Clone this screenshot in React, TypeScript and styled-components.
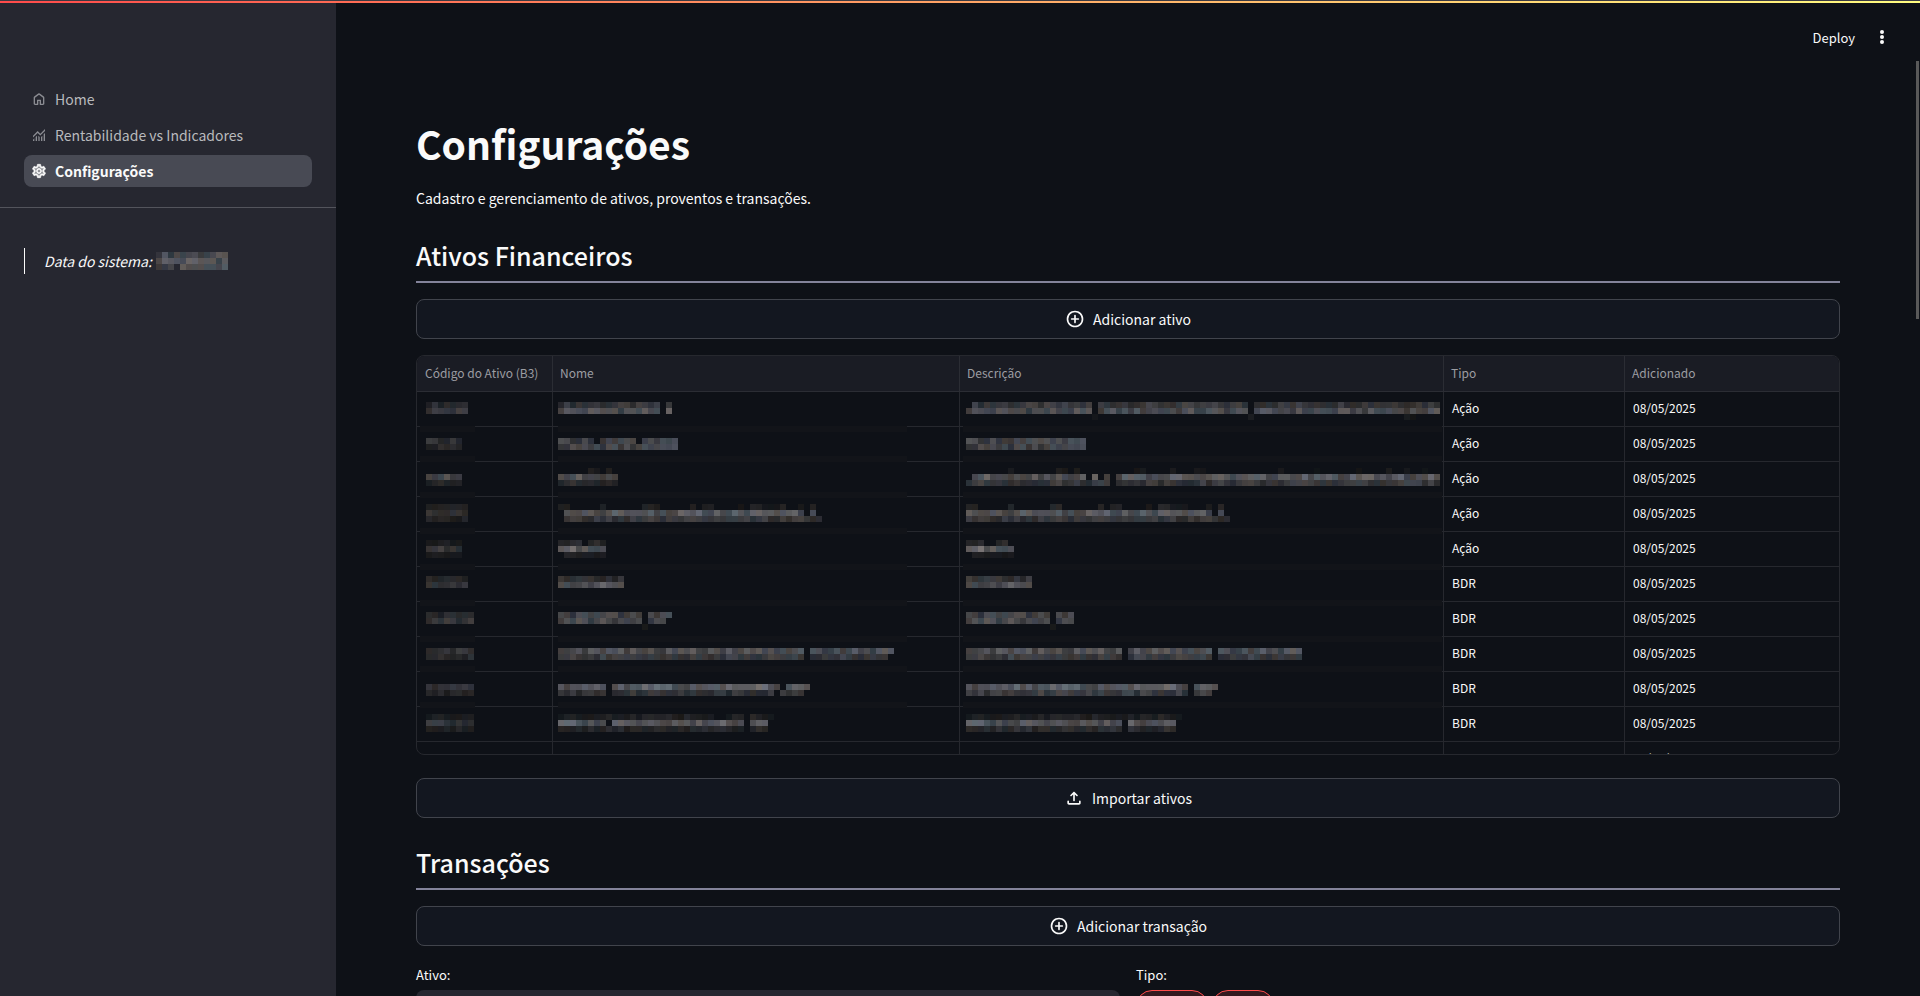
import React from "react";
import styled, { createGlobalStyle } from "styled-components";
import { MdOutlineSettings } from "react-icons/md";

const GlobalStyle = createGlobalStyle`
  *, *::before, *::after { box-sizing: border-box; }
  body { margin: 0; background: #0e1117; }
  body, button, select, table { font-family: "Noto Sans CJK JP", "Noto Sans", sans-serif; }
`;

const Shell = styled.div`
  position: relative;
  display: flex;
  height: 100vh;
  overflow: hidden;
  color: #fafafa;
  background: #0e1117;
  font-size: 14px;
  line-height: 26px;
`;

const Decoration = styled.div`
  position: absolute;
  inset: 0 0 auto 0;
  height: 3px;
  border-top: 1px solid #3a3a42;
  background: linear-gradient(90deg, #ff4b4b, #fffd80);
  background-origin: border-box;
  z-index: 2;
`;

const Sidebar = styled.aside`
  flex: 0 0 336px;
  background: #262730;
`;

const Nav = styled.nav`
  padding: 83px 24px 20px;
  border-bottom: 1px solid #53545c;
`;

const NavList = styled.ul`
  display: flex;
  flex-direction: column;
  gap: 4px;
  margin: 0;
  padding: 0;
  list-style: none;
`;

const NavLink = styled.a<{ $active?: boolean }>`
  display: flex;
  align-items: center;
  gap: 8px;
  height: 32px;
  padding: 0 7px;
  border-radius: 8px;
  text-decoration: none;
  color: ${(p) => (p.$active ? "#fafafa" : "#b9babd")};
  font-weight: ${(p) => (p.$active ? 700 : 400)};
  background: ${(p) => (p.$active ? "#484a54" : "transparent")};

  svg {
    flex: none;
    width: 16px;
    height: 16px;
    color: ${(p) => (p.$active ? "#fafafa" : "#8b8c92")};
  }

  svg path:last-of-type {
    stroke: ${(p) => (p.$active ? "currentColor" : "none")};
    stroke-width: 1px;
  }
`;

const SystemDate = styled.blockquote`
  display: flex;
  align-items: center;
  gap: 4px;
  height: 26px;
  margin: 40px 24px;
  padding-left: 19px;
  border-left: 1px solid #fafafa;
  font-style: italic;
  line-height: 24px;
`;

const Main = styled.main`
  position: relative;
  flex: 1;
  min-width: 0;
  overflow: hidden;
`;

const Toolbar = styled.header`
  display: flex;
  justify-content: flex-end;
  align-items: center;
  gap: 17px;
  height: 60px;
  padding: 14px 28px 0 0;
`;

const ToolbarButton = styled.button`
  display: flex;
  align-items: center;
  padding: 0;
  border: 0;
  background: none;
  color: #fafafa;
  font-size: 13px;
`;

const ScrollThumb = styled.div`
  position: absolute;
  top: 61px;
  right: 1px;
  width: 3px;
  height: 258px;
  background: #595959;
`;

const Content = styled.div`
  display: flex;
  flex-direction: column;
  padding: 57px 80px 0;
`;

const Title = styled.h1`
  margin: 0;
  font-size: 39px;
  line-height: 52px;
  font-weight: 700;
`;

const Lead = styled.p`
  margin: 16px 0;
`;

const SectionTitle = styled.h2`
  margin: 0;
  padding: 10px 0 8px;
  border-bottom: 2px solid #83839a;
  font-size: 25px;
  line-height: 36px;
  font-weight: 500;
`;

const WideButton = styled.button`
  display: flex;
  justify-content: center;
  align-items: center;
  gap: 8px;
  width: 100%;
  height: 40px;
  margin: 16px 0;
  border: 1px solid #41444c;
  border-radius: 8px;
  background: #131720;
  color: #fafafa;
  font-size: 14px;

  svg {
    width: 20px;
    height: 20px;
  }
`;

const TableFrame = styled.div`
  height: 400px;
  margin-bottom: 7px;
  overflow: hidden;
  border: 1px solid #26282e;
  border-radius: 8px;
`;

const Table = styled.table`
  width: 100%;
  table-layout: fixed;
  border-collapse: separate;
  border-spacing: 0;
  font-size: 12px;
  line-height: 16px;
`;

const Col = styled.col<{ $width?: number }>`
  width: ${(p) => (p.$width ? p.$width + "px" : "auto")};
`;

const HeadCell = styled.th`
  height: 36px;
  padding: 0 7px 2px;
  border: solid #2b2d34;
  border-width: 0 1px 1px 0;
  background: #1a1c24;
  color: #9c9da2;
  font-weight: 400;
  text-align: left;
  white-space: nowrap;

  &:first-child { padding-left: 8px; }
  &:last-child { border-right: 0; }
`;

const Cell = styled.td`
  position: relative;
  height: 35px;
  padding: 0 8px 2px;
  border: solid #26282e;
  border-width: 0 1px 1px 0;

  &:last-child { border-right: 0; }
`;

const Overlay = styled.div<{ $left: number }>`
  position: absolute;
  left: ${(p) => p.$left}px;
  top: 10px;
  z-index: 1;
  display: flex;
`;

const FieldRow = styled.div`
  display: grid;
  grid-template-columns: 1fr 1fr;
  gap: 16px;
  font-size: 13px;
`;

const Field = styled.div`
  display: flex;
  flex-direction: column;
  gap: 2px;
`;

const Select = styled.select`
  height: 40px;
  padding: 0 12px;
  border: 0;
  border-radius: 8px;
  appearance: none;
  background: #262730;
  color: #fafafa;
  font-size: 14px;
`;

const PillGroup = styled.div`
  display: flex;
  gap: 4px;
`;

const Pill = styled.button`
  height: 32px;
  padding: 0 11px;
  border: 1px solid #ff4b4b;
  border-radius: 16px;
  background: #33191f;
  color: #ff4b4b;
  font-size: 13px;
`;

const BLOCK = 6;
const TINTS = [
  [-4, 0, 12],
  [5, 0, 0],
  [0, 0, 4],
  [-8, 2, 10],
  [6, 1, -2],
  [0, 0, 8],
  [0, 1, 3],
];

type Run = [from: number, to: number];
type MosaicLine = [row: number, shade: number, ...runs: Run[]];

const noise = (x: number, y: number) => {
  const n = Math.sin(x * 12.9898 + y * 78.233) * 43758.5453;
  return n - Math.floor(n);
};

const blockColor = (x: number, y: number, shade: number) => {
  const level = shade * (0.7 + 0.5 * noise(x, y));
  const tint = TINTS[Math.floor(noise(y + 3, x + 5) * TINTS.length)];
  const strength = Math.min(1, shade / 70);
  return `rgb(${tint.map((t) => Math.round(level + t * strength)).join(",")})`;
};

// Pixelated cover for private values: each run fills blocks [from, to) of its row.
const Mosaic = ({ lines, offset = 0 }: { lines: MosaicLine[]; offset?: number }) => (
  <>
    {lines.map(([row, shade, ...runs]) =>
      runs.map(([from, to]) =>
        Array.from({ length: to - from }, (_, i) => (
          <rect
            key={`${row}-${from + i}`}
            x={offset + (from + i) * BLOCK}
            y={row * BLOCK}
            width={BLOCK}
            height={BLOCK}
            fill={blockColor(from + i, row, shade)}
          />
        ))
      )
    )}
  </>
);

const STRIPS = [4, 9, 15, 21, 27, 33, 39, 44, 50];

type Patch = { width: number; offset: number; left: number; lines: MosaicLine[] };

const RedactedColumn = ({ patch }: { patch: Patch }) => (
  <Overlay $left={patch.left} aria-hidden="true">
    <svg width={patch.width} height={336} shapeRendering="crispEdges">
      <rect width={patch.width} height={336} fill="#0e1117" />
      {STRIPS.map((s) => (
        <rect key={s} y={s * BLOCK} width={patch.width} height={BLOCK} fill="#121419" />
      ))}
      <Mosaic lines={patch.lines} offset={patch.offset} />
    </svg>
  </Overlay>
);

const codePatch: Patch = {
  left: 3,
  width: 55,
  offset: 6,
  lines: [
    [0, 44, [0, 7]], [1, 58, [0, 7]],
    [6, 50, [0, 6]], [7, 40, [0, 6]],
    [12, 70, [0, 6]], [13, 36, [0, 6]],
    [17, 30, [0, 7]], [18, 50, [0, 7]], [19, 34, [0, 7]],
    [23, 28, [0, 6]], [24, 56, [0, 6]], [25, 30, [0, 6]],
    [29, 36, [0, 7]], [30, 60, [0, 7]],
    [35, 42, [0, 8]], [36, 52, [0, 8]],
    [41, 52, [0, 8]], [42, 42, [0, 8]],
    [47, 56, [0, 8]], [48, 38, [0, 8]],
    [52, 34, [0, 8]], [53, 54, [0, 8]], [54, 34, [0, 8]],
  ],
};

const namePatch: Patch = {
  left: 5,
  width: 349,
  offset: 0,
  lines: [
    [0, 54, [0, 17], [18, 19]], [1, 82, [0, 17], [18, 19]],
    [6, 66, [0, 6], [7, 13], [14, 20]], [7, 68, [0, 20]],
    [11, 26, [5, 7], [8, 9]], [12, 80, [0, 10]], [13, 44, [0, 10]],
    [17, 30, [0, 2], [7, 8], [14, 17], [22, 23], [24, 26], [30, 31], [32, 38], [40, 41], [42, 43]],
    [18, 86, [1, 41], [42, 43]], [19, 56, [1, 44]],
    [23, 40, [0, 4], [5, 8]], [24, 96, [0, 8]], [25, 36, [1, 8]],
    [29, 46, [0, 11]], [30, 88, [0, 11]],
    [35, 68, [0, 14], [15, 19]], [36, 72, [0, 14], [15, 18]], [37, 24, [14, 15]],
    [41, 78, [0, 41], [42, 56]], [42, 60, [0, 41], [42, 55]],
    [47, 92, [0, 8], [9, 37], [38, 42]], [48, 52, [0, 8], [9, 36], [37, 41]],
    [52, 34, [0, 26], [28, 31], [32, 36]], [53, 90, [0, 8], [9, 31], [32, 35]], [54, 38, [0, 31], [32, 35]],
  ],
};

const descPatch: Patch = {
  left: 3,
  width: 479,
  offset: 3,
  lines: [
    [0, 58, [1, 21], [22, 47], [48, 79]], [1, 76, [0, 21], [22, 47], [48, 79]],
    [2, 24, [21, 22], [47, 48], [73, 75]],
    [6, 70, [0, 20]], [7, 66, [0, 20]],
    [11, 26, [7, 8], [15, 17], [18, 19], [28, 30], [34, 35], [38, 40], [52, 53], [58, 59], [65, 66], [70, 71], [73, 74], [76, 77]],
    [12, 86, [1, 20], [21, 22], [23, 24], [25, 79]], [13, 58, [0, 24], [25, 79]],
    [17, 34, [0, 2], [7, 8], [14, 16], [22, 23], [24, 26], [30, 31], [32, 37], [40, 41], [42, 43]],
    [18, 84, [0, 41], [42, 43]], [19, 54, [0, 44]],
    [23, 40, [0, 3], [5, 7]], [24, 100, [0, 8]], [25, 32, [1, 8]],
    [29, 52, [0, 11]], [30, 84, [0, 11]],
    [35, 68, [0, 14], [15, 18]], [36, 74, [0, 14], [15, 18]], [37, 24, [14, 15]],
    [41, 80, [0, 26], [27, 41], [42, 56]], [42, 62, [0, 26], [27, 41], [42, 56]],
    [47, 90, [0, 37], [38, 42]], [48, 62, [0, 37], [38, 41]],
    [52, 34, [0, 36]], [53, 88, [0, 26], [27, 35]], [54, 44, [0, 26], [27, 35]],
  ],
};

const dateLines: MosaicLine[] = [
  [0, 74, [0, 12]],
  [1, 90, [0, 12]],
  [2, 78, [0, 3], [4, 12]],
];

const rows = Array.from({ length: 11 }, (_, i) => ({
  type: i < 5 ? "Ação" : "BDR",
  date: "08/05/2025",
}));

const HomeIcon = () => (
  <svg viewBox="0 -960 960 960" fill="currentColor" aria-hidden="true">
    <path d="M240-200h120v-200q0-17 11.5-28.5T400-440h160q17 0 28.5 11.5T600-400v200h120v-360L480-740 240-560v360Zm-80 0v-360q0-19 8.5-36t23.5-28l240-180q21-16 48-16t48 16l240 180q15 11 23.5 28t8.5 36v360q0 33-23.5 56.5T720-120H560q-17 0-28.5-11.5T520-160v-200h-80v200q0 17-11.5 28.5T400-120H240q-33 0-56.5-23.5T160-200Z" />
  </svg>
);

const MonitoringIcon = () => (
  <svg viewBox="0 -960 960 960" fill="currentColor" aria-hidden="true">
    <path d="M120-120v-80l80-80v160h-80Zm160 0v-240l80-80v320h-80Zm160 0v-320l80 81v239h-80Zm160 0v-239l80-80v319h-80Zm160 0v-400l80-80v480h-80ZM120-327v-113l280-280 160 160 280-280v113L560-447 400-607 120-327Z" />
  </svg>
);

const AddCircleIcon = () => (
  <svg viewBox="0 -960 960 960" fill="currentColor" aria-hidden="true">
    <path d="M440-440v120q0 17 11.5 28.5T480-280q17 0 28.5-11.5T520-320v-120h120q17 0 28.5-11.5T680-480q0-17-11.5-28.5T640-520H520v-120q0-17-11.5-28.5T480-680q-17 0-28.5 11.5T440-640v120H320q-17 0-28.5 11.5T280-480q0 17 11.5 28.5T320-440h120Zm40 360q-83 0-156-31.5T197-197q-54-54-85.5-127T80-480q0-83 31.5-156T197-763q54-54 127-85.5T480-880q83 0 156 31.5T763-763q54 54 85.5 127T880-480q0 83-31.5 156T763-197q-54 54-127 85.5T480-80Zm0-80q134 0 227-93t93-227q0-134-93-227t-227-93q-134 0-227 93t-93 227q0 134 93 227t227 93Z" />
  </svg>
);

const UploadIcon = () => (
  <svg viewBox="0 -960 960 960" fill="currentColor" aria-hidden="true">
    <path d="M240-160q-33 0-56.5-23.5T160-240v-80q0-17 11.5-28.5T200-360q17 0 28.5 11.5T240-320v80h480v-80q0-17 11.5-28.5T760-360q17 0 28.5 11.5T800-320v80q0 33-23.5 56.5T720-160H240Zm200-486-75 75q-12 12-28.5 11.5T308-572q-11-12-11.5-28t11.5-28l144-144q6-6 13-8.5t15-2.5q8 0 15 2.5t13 8.5l144 144q12 12 11.5 28T652-572q-12 12-28.5 12.5T595-571l-75-75v286q0 17-11.5 28.5T480-320q-17 0-28.5-11.5T440-360v-286Z" />
  </svg>
);

const MoreIcon = () => (
  <svg width="20" height="20" viewBox="0 0 20 20" fill="currentColor" aria-hidden="true">
    <circle cx="10" cy="5" r="2" />
    <circle cx="10" cy="10" r="2" />
    <circle cx="10" cy="15" r="2" />
  </svg>
);

export default function App() {
  return (
    <Shell>
      <GlobalStyle />
      <Decoration />
      <Sidebar>
        <Nav>
          <NavList>
            <li><NavLink href="#home"><HomeIcon />Home</NavLink></li>
            <li><NavLink href="#rentabilidade"><MonitoringIcon />Rentabilidade vs Indicadores</NavLink></li>
            <li><NavLink href="#configuracoes" $active aria-current="page"><MdOutlineSettings />Configurações</NavLink></li>
          </NavList>
        </Nav>
        <SystemDate>
          Data do sistema:
          <svg width="78" height="18" shapeRendering="crispEdges" aria-hidden="true">
            <Mosaic lines={dateLines} />
          </svg>
        </SystemDate>
      </Sidebar>
      <Main>
        <Toolbar>
          <ToolbarButton type="button">Deploy</ToolbarButton>
          <ToolbarButton type="button" aria-label="Menu"><MoreIcon /></ToolbarButton>
        </Toolbar>
        <ScrollThumb />
        <Content>
          <Title>Configurações</Title>
          <Lead>Cadastro e gerenciamento de ativos, proventos e transações.</Lead>
          <SectionTitle>Ativos Financeiros</SectionTitle>
          <WideButton type="button"><AddCircleIcon />Adicionar ativo</WideButton>
          <TableFrame>
            <Table>
              <colgroup>
                <Col $width={136} />
                <Col $width={407} />
                <Col $width={484} />
                <Col $width={181} />
                <Col />
              </colgroup>
              <thead>
                <tr>
                  <HeadCell scope="col">Código do Ativo (B3)</HeadCell>
                  <HeadCell scope="col">Nome</HeadCell>
                  <HeadCell scope="col">Descrição</HeadCell>
                  <HeadCell scope="col">Tipo</HeadCell>
                  <HeadCell scope="col">Adicionado</HeadCell>
                </tr>
              </thead>
              <tbody>
                {rows.map((row, i) => (
                  <tr key={i}>
                    <Cell>{i === 0 && <RedactedColumn patch={codePatch} />}</Cell>
                    <Cell>{i === 0 && <RedactedColumn patch={namePatch} />}</Cell>
                    <Cell>{i === 0 && <RedactedColumn patch={descPatch} />}</Cell>
                    <Cell>{i < 10 && row.type}</Cell>
                    <Cell>{row.date}</Cell>
                  </tr>
                ))}
              </tbody>
            </Table>
          </TableFrame>
          <WideButton type="button"><UploadIcon />Importar ativos</WideButton>
          <SectionTitle>Transações</SectionTitle>
          <WideButton type="button"><AddCircleIcon />Adicionar transação</WideButton>
          <FieldRow>
            <Field>
              <label htmlFor="ativo">Ativo:</label>
              <Select id="ativo" />
            </Field>
            <Field>
              <span id="tipo">Tipo:</span>
              <PillGroup role="group" aria-labelledby="tipo">
                <Pill type="button">Compra</Pill>
                <Pill type="button">Venda</Pill>
              </PillGroup>
            </Field>
          </FieldRow>
        </Content>
      </Main>
    </Shell>
  );
}
